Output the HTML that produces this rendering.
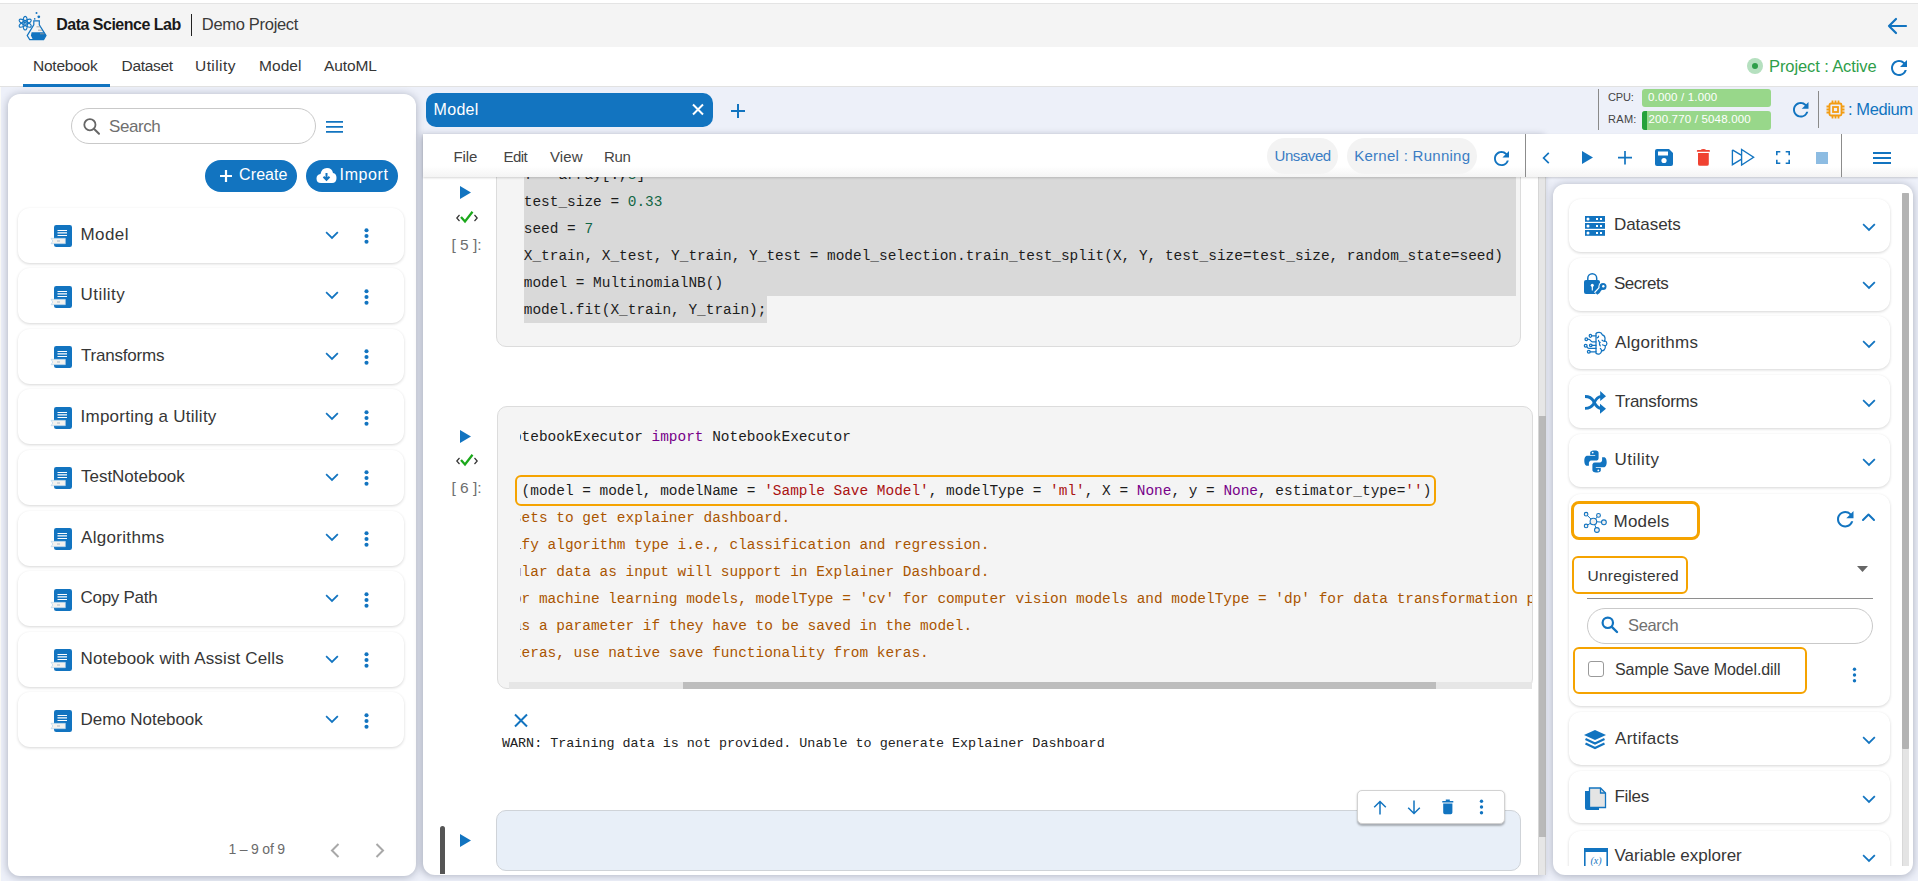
<!DOCTYPE html>
<html><head><meta charset="utf-8">
<style>
*{box-sizing:border-box;margin:0;padding:0}
html,body{width:1918px;height:881px;overflow:hidden;background:#edf0f9;font-family:"Liberation Sans",sans-serif;color:#222}
.a{position:absolute}
.t{position:absolute;white-space:nowrap;line-height:1}
svg{position:absolute;overflow:visible}
#top{left:0;top:0;width:1918px;height:47px;background:#f4f4f4;border-top:3px solid #fff}
#top:before{content:"";position:absolute;left:0;top:0;width:100%;height:1px;background:#e4e4e4}
#nav{left:0;top:47px;width:1918px;height:40px;background:#fff;border-bottom:1px solid #e2e2e2}
.li{position:absolute;left:18px;width:386px;height:55px;background:#fff;border-radius:12px;box-shadow:0 1px 3px rgba(0,0,0,.16)}
.li .nm{position:absolute;left:62px;top:19px;font-size:17px;color:#262626;white-space:nowrap;line-height:1}
.code{position:absolute;font-family:"Liberation Mono",monospace;font-size:14.45px;line-height:27px;white-space:pre;color:#1c1c1c}
.rc{position:absolute;left:1569px;width:321px;height:53px;background:#fff;border-radius:12px;box-shadow:0 1px 3px rgba(0,0,0,.16)}
.rc .nm{position:absolute;left:45px;top:18px;font-size:17px;color:#262626;white-space:nowrap;line-height:1}
</style></head><body>
<div id="top" class="a"></div><div id="nav" class="a"></div><svg style="left:14px;top:8px" width="36" height="36" viewBox="0 0 36 36">
<g fill="none" stroke="#1274c0" stroke-width="1.1">
<ellipse cx="11.2" cy="15.2" rx="6.8" ry="2.2" transform="rotate(90 11.2 15.2)"/>
<ellipse cx="11.2" cy="15.2" rx="6.8" ry="2.2" transform="rotate(30 11.2 15.2)"/>
<ellipse cx="11.2" cy="15.2" rx="6.8" ry="2.2" transform="rotate(150 11.2 15.2)"/>
<circle cx="11.2" cy="15.2" r="1.1"/>
<path d="M19.8 12.8 H25.3 V16.8 L32 27.6 L29.6 31.6 H15.7 L13.2 27.6 L19.8 16.8 Z" stroke-width="1.2"/>
</g>
<path d="M17.6 24.3 H30.2 L32 27.6 L29.6 31.6 H18.8 L16.9 27.6 Z" fill="#1274c0"/>
<path d="M22.5 18.8 H26.3 M24 22.2 H28 M26 25.8 H30.3" stroke="#9a9a9a" stroke-width="0.8"/>
<circle cx="22.5" cy="5" r="1" fill="#1274c0"/>
<circle cx="24.8" cy="8.8" r="1.4" fill="#1274c0"/>
<circle cx="20.7" cy="10.9" r="0.8" fill="#1274c0"/>
</svg><div class="t" style="left:56.2px;top:16.56px;font-size:16px;color:#1a1a1a;letter-spacing:-0.497px;font-weight:bold;">Data Science Lab</div><div class="a" style="left:190.5px;top:14px;width:1.6px;height:22px;background:#222"></div><div class="t" style="left:201.8px;top:16.14px;font-size:16.5px;color:#3a3a3a;letter-spacing:-0.305px;font-weight:normal;">Demo Project</div><svg style="left:1887px;top:17px" width="20" height="18" viewBox="0 0 20 18"><path d="M19 9 H2 M9 2 L2 9 L9 16" fill="none" stroke="#1274c0" stroke-width="2.2" stroke-linecap="round" stroke-linejoin="round"/></svg><div class="t" style="left:33px;top:58.09px;font-size:15.5px;color:#363636;letter-spacing:-0.243px;font-weight:normal;">Notebook</div><div class="t" style="left:121.5px;top:58.09px;font-size:15.5px;color:#363636;letter-spacing:-0.317px;font-weight:normal;">Dataset</div><div class="t" style="left:195px;top:58.09px;font-size:15.5px;color:#363636;letter-spacing:0.433px;font-weight:normal;">Utility</div><div class="t" style="left:259px;top:58.09px;font-size:15.5px;color:#363636;letter-spacing:0.06px;font-weight:normal;">Model</div><div class="t" style="left:324.0px;top:58.09px;font-size:15.5px;color:#363636;letter-spacing:-0.09px;font-weight:normal;">AutoML</div><div class="a" style="left:23px;top:84px;width:87px;height:3px;background:#1274c0"></div><div class="a" style="left:1747px;top:58px;width:16px;height:16px;border-radius:50%;background:#b5e0bf"></div><div class="a" style="left:1752px;top:63px;width:6px;height:6px;border-radius:50%;background:#2e9e4a"></div><div class="t" style="left:1769px;top:57.84px;font-size:16.5px;color:#2e9e4a;letter-spacing:-0.1px;font-weight:normal;">Project : Active</div><svg style="left:1890.5px;top:59.5px" width="16" height="16" viewBox="4 4 16 16"><path d="M17.65 6.35A7.958 7.958 0 0 0 12 4c-4.42 0-7.99 3.58-7.99 8s3.57 8 7.99 8c3.73 0 6.84-2.55 7.73-6h-2.08A5.990 5.990 0 0 1 12 18c-3.31 0-6-2.690-6-6s2.69-6 6-6c1.66 0 3.14.69 4.22 1.78L13 11h7V4l-2.35 2.35z" fill="#1274c0"/></svg><div class="a" style="left:0;top:87px;width:1px;height:794px;background:#fbfbf8"></div><div class="a" style="left:8px;top:94px;width:408px;height:781.5px;background:#fff;border-radius:12px;box-shadow:0 1px 8px rgba(10,20,50,.30)"></div><div class="a" style="left:71px;top:108px;width:245px;height:36px;border:1px solid #c9c9c9;border-radius:18px;background:#fff"></div><svg style="left:83px;top:118px" width="18" height="18" viewBox="0 0 18 18"><circle cx="6.9" cy="6.7" r="5.6" fill="none" stroke="#666" stroke-width="1.8"/><path d="M10.9 10.7 L16 15.8" stroke="#666" stroke-width="2" stroke-linecap="round"/></svg><div class="t" style="left:109px;top:118.42px;font-size:17px;color:#6f6f6f;letter-spacing:-0.44px;font-weight:normal;">Search</div><svg style="left:326px;top:120.5px" width="17" height="12" viewBox="0 0 17 12"><path d="M0 0.9 H17 M0 5.9 H17 M0 10.9 H17" stroke="#1274c0" stroke-width="1.8"/></svg><div class="a" style="left:205px;top:160px;width:92px;height:32px;border-radius:16px;background:#1274c0"></div><svg style="left:219px;top:169px" width="14" height="14" viewBox="0 0 14 14"><path d="M7 1 V13 M1 7 H13" stroke="#fff" stroke-width="2.2"/></svg><div class="t" style="left:239.10000000000002px;top:167.06px;font-size:16px;color:#fff;letter-spacing:0.08px;font-weight:normal;">Create</div><div class="a" style="left:306px;top:160px;width:92px;height:32px;border-radius:16px;background:#1274c0"></div><svg style="left:316px;top:167px" width="21" height="17" viewBox="0 0 21 17"><path d="M5 16 Q0.5 16 0.5 11.5 Q0.5 7.5 4.5 7 Q5.5 1 11 1 Q16 1 17 6 Q20.5 6.5 20.5 11 Q20.5 16 16 16 Z" fill="#fff"/><path d="M10.5 6 V12.5 M7.5 9.8 L10.5 12.8 L13.5 9.8" fill="none" stroke="#1274c0" stroke-width="2"/></svg><div class="t" style="left:339.6px;top:167.06px;font-size:16px;color:#fff;letter-spacing:0.6px;font-weight:normal;">Import</div><div class="li" style="top:207.5px"></div><svg style="left:51px;top:225px" width="22" height="22" viewBox="0 0 22 22"><rect x="3" y="0" width="18" height="22" rx="2.2" fill="#1274c0"/><path d="M6.5 5.5 H16 M6.5 7.8 H16 M6.5 10.5 H16" stroke="#fff" stroke-width="1.2"/><path d="M0 13.3 H14.4 V18.7 H0 L1.8 16 Z" fill="#f4f2ee" stroke="#a9d0ee" stroke-width="0.6"/><path d="M6 16 H9" stroke="#9ab" stroke-width="0.8"/></svg><div class="t" style="left:80.5px;top:225.82px;font-size:17px;color:#363636;letter-spacing:0.43px;font-weight:normal;">Model</div><svg style="left:326px;top:232px" width="12" height="7" viewBox="0 0 12 7"><path d="M0.8 0.8 L6 6 L11.2 0.8" fill="none" stroke="#1274c0" stroke-width="1.8" stroke-linecap="square" stroke-linejoin="miter"/></svg><svg style="left:363.5px;top:228px" width="6" height="16" viewBox="0 0 6 16"><circle cx="2.5" cy="2.2" r="2.05" fill="#1274c0"/><circle cx="2.5" cy="8" r="2.05" fill="#1274c0"/><circle cx="2.5" cy="13.8" r="2.05" fill="#1274c0"/></svg><div class="li" style="top:268.1px"></div><svg style="left:51px;top:286px" width="22" height="22" viewBox="0 0 22 22"><rect x="3" y="0" width="18" height="22" rx="2.2" fill="#1274c0"/><path d="M6.5 5.5 H16 M6.5 7.8 H16 M6.5 10.5 H16" stroke="#fff" stroke-width="1.2"/><path d="M0 13.3 H14.4 V18.7 H0 L1.8 16 Z" fill="#f4f2ee" stroke="#a9d0ee" stroke-width="0.6"/><path d="M6 16 H9" stroke="#9ab" stroke-width="0.8"/></svg><div class="t" style="left:80.5px;top:286.42px;font-size:17px;color:#363636;letter-spacing:0.45px;font-weight:normal;">Utility</div><svg style="left:326px;top:292px" width="12" height="7" viewBox="0 0 12 7"><path d="M0.8 0.8 L6 6 L11.2 0.8" fill="none" stroke="#1274c0" stroke-width="1.8" stroke-linecap="square" stroke-linejoin="miter"/></svg><svg style="left:363.5px;top:289px" width="6" height="16" viewBox="0 0 6 16"><circle cx="2.5" cy="2.2" r="2.05" fill="#1274c0"/><circle cx="2.5" cy="8" r="2.05" fill="#1274c0"/><circle cx="2.5" cy="13.8" r="2.05" fill="#1274c0"/></svg><div class="li" style="top:328.7px"></div><svg style="left:51px;top:346px" width="22" height="22" viewBox="0 0 22 22"><rect x="3" y="0" width="18" height="22" rx="2.2" fill="#1274c0"/><path d="M6.5 5.5 H16 M6.5 7.8 H16 M6.5 10.5 H16" stroke="#fff" stroke-width="1.2"/><path d="M0 13.3 H14.4 V18.7 H0 L1.8 16 Z" fill="#f4f2ee" stroke="#a9d0ee" stroke-width="0.6"/><path d="M6 16 H9" stroke="#9ab" stroke-width="0.8"/></svg><div class="t" style="left:81.0px;top:347.02px;font-size:17px;color:#363636;letter-spacing:-0.216px;font-weight:normal;">Transforms</div><svg style="left:326px;top:353px" width="12" height="7" viewBox="0 0 12 7"><path d="M0.8 0.8 L6 6 L11.2 0.8" fill="none" stroke="#1274c0" stroke-width="1.8" stroke-linecap="square" stroke-linejoin="miter"/></svg><svg style="left:363.5px;top:349px" width="6" height="16" viewBox="0 0 6 16"><circle cx="2.5" cy="2.2" r="2.05" fill="#1274c0"/><circle cx="2.5" cy="8" r="2.05" fill="#1274c0"/><circle cx="2.5" cy="13.8" r="2.05" fill="#1274c0"/></svg><div class="li" style="top:389.3px"></div><svg style="left:51px;top:407px" width="22" height="22" viewBox="0 0 22 22"><rect x="3" y="0" width="18" height="22" rx="2.2" fill="#1274c0"/><path d="M6.5 5.5 H16 M6.5 7.8 H16 M6.5 10.5 H16" stroke="#fff" stroke-width="1.2"/><path d="M0 13.3 H14.4 V18.7 H0 L1.8 16 Z" fill="#f4f2ee" stroke="#a9d0ee" stroke-width="0.6"/><path d="M6 16 H9" stroke="#9ab" stroke-width="0.8"/></svg><div class="t" style="left:80.5px;top:407.62px;font-size:17px;color:#363636;letter-spacing:0.253px;font-weight:normal;">Importing a Utility</div><svg style="left:326px;top:413px" width="12" height="7" viewBox="0 0 12 7"><path d="M0.8 0.8 L6 6 L11.2 0.8" fill="none" stroke="#1274c0" stroke-width="1.8" stroke-linecap="square" stroke-linejoin="miter"/></svg><svg style="left:363.5px;top:410px" width="6" height="16" viewBox="0 0 6 16"><circle cx="2.5" cy="2.2" r="2.05" fill="#1274c0"/><circle cx="2.5" cy="8" r="2.05" fill="#1274c0"/><circle cx="2.5" cy="13.8" r="2.05" fill="#1274c0"/></svg><div class="li" style="top:449.9px"></div><svg style="left:51px;top:467px" width="22" height="22" viewBox="0 0 22 22"><rect x="3" y="0" width="18" height="22" rx="2.2" fill="#1274c0"/><path d="M6.5 5.5 H16 M6.5 7.8 H16 M6.5 10.5 H16" stroke="#fff" stroke-width="1.2"/><path d="M0 13.3 H14.4 V18.7 H0 L1.8 16 Z" fill="#f4f2ee" stroke="#a9d0ee" stroke-width="0.6"/><path d="M6 16 H9" stroke="#9ab" stroke-width="0.8"/></svg><div class="t" style="left:81.0px;top:468.22px;font-size:17px;color:#363636;letter-spacing:-0.016px;font-weight:normal;">TestNotebook</div><svg style="left:326px;top:474px" width="12" height="7" viewBox="0 0 12 7"><path d="M0.8 0.8 L6 6 L11.2 0.8" fill="none" stroke="#1274c0" stroke-width="1.8" stroke-linecap="square" stroke-linejoin="miter"/></svg><svg style="left:363.5px;top:470px" width="6" height="16" viewBox="0 0 6 16"><circle cx="2.5" cy="2.2" r="2.05" fill="#1274c0"/><circle cx="2.5" cy="8" r="2.05" fill="#1274c0"/><circle cx="2.5" cy="13.8" r="2.05" fill="#1274c0"/></svg><div class="li" style="top:510.5px"></div><svg style="left:51px;top:528px" width="22" height="22" viewBox="0 0 22 22"><rect x="3" y="0" width="18" height="22" rx="2.2" fill="#1274c0"/><path d="M6.5 5.5 H16 M6.5 7.8 H16 M6.5 10.5 H16" stroke="#fff" stroke-width="1.2"/><path d="M0 13.3 H14.4 V18.7 H0 L1.8 16 Z" fill="#f4f2ee" stroke="#a9d0ee" stroke-width="0.6"/><path d="M6 16 H9" stroke="#9ab" stroke-width="0.8"/></svg><div class="t" style="left:81.0px;top:528.82px;font-size:17px;color:#363636;letter-spacing:0.314px;font-weight:normal;">Algorithms</div><svg style="left:326px;top:534px" width="12" height="7" viewBox="0 0 12 7"><path d="M0.8 0.8 L6 6 L11.2 0.8" fill="none" stroke="#1274c0" stroke-width="1.8" stroke-linecap="square" stroke-linejoin="miter"/></svg><svg style="left:363.5px;top:531px" width="6" height="16" viewBox="0 0 6 16"><circle cx="2.5" cy="2.2" r="2.05" fill="#1274c0"/><circle cx="2.5" cy="8" r="2.05" fill="#1274c0"/><circle cx="2.5" cy="13.8" r="2.05" fill="#1274c0"/></svg><div class="li" style="top:571.1px"></div><svg style="left:51px;top:589px" width="22" height="22" viewBox="0 0 22 22"><rect x="3" y="0" width="18" height="22" rx="2.2" fill="#1274c0"/><path d="M6.5 5.5 H16 M6.5 7.8 H16 M6.5 10.5 H16" stroke="#fff" stroke-width="1.2"/><path d="M0 13.3 H14.4 V18.7 H0 L1.8 16 Z" fill="#f4f2ee" stroke="#a9d0ee" stroke-width="0.6"/><path d="M6 16 H9" stroke="#9ab" stroke-width="0.8"/></svg><div class="t" style="left:80.5px;top:589.42px;font-size:17px;color:#363636;letter-spacing:-0.275px;font-weight:normal;">Copy Path</div><svg style="left:326px;top:595px" width="12" height="7" viewBox="0 0 12 7"><path d="M0.8 0.8 L6 6 L11.2 0.8" fill="none" stroke="#1274c0" stroke-width="1.8" stroke-linecap="square" stroke-linejoin="miter"/></svg><svg style="left:363.5px;top:592px" width="6" height="16" viewBox="0 0 6 16"><circle cx="2.5" cy="2.2" r="2.05" fill="#1274c0"/><circle cx="2.5" cy="8" r="2.05" fill="#1274c0"/><circle cx="2.5" cy="13.8" r="2.05" fill="#1274c0"/></svg><div class="li" style="top:631.7px"></div><svg style="left:51px;top:649px" width="22" height="22" viewBox="0 0 22 22"><rect x="3" y="0" width="18" height="22" rx="2.2" fill="#1274c0"/><path d="M6.5 5.5 H16 M6.5 7.8 H16 M6.5 10.5 H16" stroke="#fff" stroke-width="1.2"/><path d="M0 13.3 H14.4 V18.7 H0 L1.8 16 Z" fill="#f4f2ee" stroke="#a9d0ee" stroke-width="0.6"/><path d="M6 16 H9" stroke="#9ab" stroke-width="0.8"/></svg><div class="t" style="left:80.5px;top:650.02px;font-size:17px;color:#363636;letter-spacing:0.154px;font-weight:normal;">Notebook with Assist Cells</div><svg style="left:326px;top:656px" width="12" height="7" viewBox="0 0 12 7"><path d="M0.8 0.8 L6 6 L11.2 0.8" fill="none" stroke="#1274c0" stroke-width="1.8" stroke-linecap="square" stroke-linejoin="miter"/></svg><svg style="left:363.5px;top:652px" width="6" height="16" viewBox="0 0 6 16"><circle cx="2.5" cy="2.2" r="2.05" fill="#1274c0"/><circle cx="2.5" cy="8" r="2.05" fill="#1274c0"/><circle cx="2.5" cy="13.8" r="2.05" fill="#1274c0"/></svg><div class="li" style="top:692.3px"></div><svg style="left:51px;top:710px" width="22" height="22" viewBox="0 0 22 22"><rect x="3" y="0" width="18" height="22" rx="2.2" fill="#1274c0"/><path d="M6.5 5.5 H16 M6.5 7.8 H16 M6.5 10.5 H16" stroke="#fff" stroke-width="1.2"/><path d="M0 13.3 H14.4 V18.7 H0 L1.8 16 Z" fill="#f4f2ee" stroke="#a9d0ee" stroke-width="0.6"/><path d="M6 16 H9" stroke="#9ab" stroke-width="0.8"/></svg><div class="t" style="left:80.5px;top:710.62px;font-size:17px;color:#363636;letter-spacing:-0.047px;font-weight:normal;">Demo Notebook</div><svg style="left:326px;top:716px" width="12" height="7" viewBox="0 0 12 7"><path d="M0.8 0.8 L6 6 L11.2 0.8" fill="none" stroke="#1274c0" stroke-width="1.8" stroke-linecap="square" stroke-linejoin="miter"/></svg><svg style="left:363.5px;top:713px" width="6" height="16" viewBox="0 0 6 16"><circle cx="2.5" cy="2.2" r="2.05" fill="#1274c0"/><circle cx="2.5" cy="8" r="2.05" fill="#1274c0"/><circle cx="2.5" cy="13.8" r="2.05" fill="#1274c0"/></svg><div class="t" style="left:228.5px;top:841.86px;font-size:14px;color:#6b6b6b;letter-spacing:-0.201px;font-weight:normal;">1 – 9 of 9</div><svg style="left:330px;top:843px" width="10" height="15" viewBox="0 0 10 15"><path d="M8.5 1 L2 7.5 L8.5 14" fill="none" stroke="#a8a8a8" stroke-width="2"/></svg><svg style="left:375px;top:843px" width="10" height="15" viewBox="0 0 10 15"><path d="M1.5 1 L8 7.5 L1.5 14" fill="none" stroke="#a8a8a8" stroke-width="2"/></svg><div class="a" style="left:426px;top:93px;width:287px;height:34px;border-radius:10px;background:#1274c0"></div><div class="t" style="left:433.5px;top:101.86px;font-size:16px;color:#fff;letter-spacing:0.325px;font-weight:normal;">Model</div><svg style="left:692px;top:104px" width="12" height="11" viewBox="0 0 12 11"><path d="M1 0.5 L11 10.5 M11 0.5 L1 10.5" stroke="#fff" stroke-width="2"/></svg><svg style="left:731px;top:104px" width="14" height="14" viewBox="0 0 14 14"><path d="M7 0 V14 M0 7 H14" stroke="#1274c0" stroke-width="2"/></svg><div class="a" style="left:1598px;top:89px;width:1px;height:41px;background:#8a8a8a"></div><div class="t" style="left:1608px;top:91.99px;font-size:11px;color:#444;letter-spacing:-0.17px;font-weight:normal;">CPU:</div><div class="t" style="left:1608px;top:113.99px;font-size:11px;color:#444;letter-spacing:0.3px;font-weight:normal;">RAM:</div><div class="a" style="left:1642px;top:89px;width:129px;height:18px;border-radius:3px;background:#98d78a"></div><div class="a" style="left:1642px;top:111px;width:129px;height:19px;border-radius:3px;background:#98d78a;overflow:hidden"><div class="a" style="left:0;top:0;width:5px;height:19px;background:#25a13c"></div></div><div class="t" style="left:1648px;top:91.57px;font-size:11.5px;color:#fff;letter-spacing:0.17px;font-weight:normal;">0.000 / 1.000</div><div class="t" style="left:1648.5px;top:113.57px;font-size:11.5px;color:#fff;letter-spacing:0.18px;font-weight:normal;">200.770 / 5048.000</div><svg style="left:1792.5px;top:101.5px" width="15.5" height="15.5" viewBox="4 4 16 16"><path d="M17.65 6.35A7.958 7.958 0 0 0 12 4c-4.42 0-7.99 3.58-7.99 8s3.57 8 7.99 8c3.73 0 6.84-2.55 7.73-6h-2.08A5.990 5.990 0 0 1 12 18c-3.31 0-6-2.690-6-6s2.69-6 6-6c1.66 0 3.14.69 4.22 1.78L13 11h7V4l-2.35 2.35z" fill="#1274c0"/></svg><div class="a" style="left:1818px;top:91px;width:1px;height:37px;background:#8a8a8a"></div><svg style="left:1826px;top:100px" width="19" height="19" viewBox="0 0 19 19"><g stroke="#f39c12" stroke-width="1.8" fill="none"><rect x="3.5" y="3.5" width="12" height="12" rx="1.5"/><rect x="7" y="7" width="5" height="5"/><path d="M6.5 0.5 V3.5 M9.5 0.5 V3.5 M12.5 0.5 V3.5 M6.5 15.5 V18.5 M9.5 15.5 V18.5 M12.5 15.5 V18.5 M0.5 6.5 H3.5 M0.5 9.5 H3.5 M0.5 12.5 H3.5 M15.5 6.5 H18.5 M15.5 9.5 H18.5 M15.5 12.5 H18.5"/></g></svg><div class="t" style="left:1848.0px;top:100.64px;font-size:16.5px;color:#1274c0;letter-spacing:-0.411px;font-weight:normal;">: Medium</div><div class="a" style="left:423px;top:134px;width:1495px;height:43px;background:linear-gradient(#fff 0,#fff 75%,#f4f4f4 100%);box-shadow:0 1px 2px rgba(0,0,0,.16);z-index:5"></div><div class="a" style="left:423px;top:134px;width:1123px;height:741px;background:#fff;border-radius:0 0 0 12px;box-shadow:-2px 1px 7px rgba(10,20,50,.26)"></div><div class="a" style="left:423px;top:177px;width:1123px;height:697px;overflow:hidden"><div class="a" style="left:73px;top:-200px;width:1025px;height:369.5px;background:#f4f4f4;border:1px solid #dcdcdc;border-radius:10px"></div><div class="a" style="left:100.8px;top:0px;width:992.2px;height:119px;background:#d9d9d9"></div><div class="a" style="left:100.8px;top:119px;width:243.2px;height:26.5px;background:#d9d9d9"></div><div class="code" style="left:100.8px;top:-15.4px">Y = array[:,<span style="color:#116644">8</span>]
test_size = <span style="color:#116644">0.33</span>
seed = <span style="color:#116644">7</span>
X_train, X_test, Y_train, Y_test = model_selection.train_test_split(X, Y, test_size=test_size, random_state=seed)
model = MultinomialNB()
model.fit(X_train, Y_train);</div><svg style="left:37.39999999999998px;top:9px" width="11" height="13" viewBox="0 0 11 13"><path d="M0 0 L11 6.5 L0 13 Z" fill="#1274c0"/></svg><svg style="left:33px;top:33.5px" width="22" height="12" viewBox="0 0 22 12"><path d="M3.5 4 L0.8 7 L3.5 10 M18.5 4 L21.2 7 L18.5 10" fill="none" stroke="#333" stroke-width="1.2"/><path d="M5 6 L9 10.5 L16.5 0.8" fill="none" stroke="#1ba81b" stroke-width="2.3"/></svg><div class="t" style="left:28.5px;top:59.5px;font-size:15.5px;color:#6e6e6e">[ 5 ]:</div><div class="a" style="left:73.5px;top:229.3px;width:1036.5px;height:283px;background:#f4f4f4;border:1px solid #dcdcdc;border-radius:10px"></div><svg style="left:37.39999999999998px;top:253px" width="11" height="13" viewBox="0 0 11 13"><path d="M0 0 L11 6.5 L0 13 Z" fill="#1274c0"/></svg><svg style="left:33px;top:277.3px" width="22" height="12" viewBox="0 0 22 12"><path d="M3.5 4 L0.8 7 L3.5 10 M18.5 4 L21.2 7 L18.5 10" fill="none" stroke="#333" stroke-width="1.2"/><path d="M5 6 L9 10.5 L16.5 0.8" fill="none" stroke="#1ba81b" stroke-width="2.3"/></svg><div class="t" style="left:28.5px;top:303px;font-size:15.5px;color:#6e6e6e">[ 6 ]:</div><div class="a" style="left:96.5px;top:229.3px;width:1012.5px;height:275px;overflow:hidden"><div class="code" style="left:-6.6px;top:17.3px">otebookExecutor <span style="color:#770088">import</span> NotebookExecutor

.(model = model, modelName = <span style='color:#aa1111'>'Sample Save Model'</span>, modelType = <span style='color:#aa1111'>'ml'</span>, X = <span style='color:#770088'>None</span>, y = <span style='color:#770088'>None</span>, estimator_type=<span style='color:#aa1111'>''</span>)
<span style="color:#aa5500">sets to get explainer dashboard.</span>
<span style="color:#aa5500">ify algorithm type i.e., classification and regression.</span>
<span style="color:#aa5500">ular data as input will support in Explainer Dashboard.</span>
<span style='color:#aa5500'>or machine learning models, modelType = 'cv' for computer vision models and modelType = 'dp' for data transformation pipelines</span>
<span style="color:#aa5500">as a parameter if they have to be saved in the model.</span>
<span style="color:#aa5500">keras, use native save functionality from keras.</span></div></div><div class="a" style="left:92.39999999999998px;top:298.4px;width:920.6px;height:30.5px;border:2.2px solid #f5a300;border-radius:6px"></div><div class="a" style="left:86px;top:504.5px;width:1023px;height:7px;background:#e6e6e6"></div><div class="a" style="left:260px;top:504.5px;width:753px;height:7px;background:#bdbdbd"></div><svg style="left:91px;top:537px" width="14" height="13" viewBox="0 0 14 13"><path d="M1 0.5 L13 12.5 M13 0.5 L1 12.5" stroke="#1274c0" stroke-width="2"/></svg><div class="code" style="left:79px;top:557.0px;font-size:13.4px;line-height:19px;color:#222">WARN: Training data is not provided. Unable to generate Explainer Dashboard</div><div class="a" style="left:73px;top:633px;width:1025px;height:61px;background:#e8eff8;border:1px solid #cfd3d8;border-radius:10px"></div><div class="a" style="left:16.5px;top:648.5px;width:5.4px;height:80px;background:#555;border-radius:3px"></div><svg style="left:37.39999999999998px;top:656.5px" width="11" height="13" viewBox="0 0 11 13"><path d="M0 0 L11 6.5 L0 13 Z" fill="#1274c0"/></svg><div class="a" style="left:933.5px;top:613.3px;width:148px;height:34px;background:#fff;border:1px solid #d2d2d2;border-radius:5px;box-shadow:0 1.5px 2px rgba(0,0,0,.28)"></div><svg style="left:949.5999999999999px;top:622.5px" width="14" height="16" viewBox="0 0 14 16"><path d="M7 14.5 V1.5 M1.2 7.3 L7 1.5 L12.8 7.3" fill="none" stroke="#1274c0" stroke-width="1.5"/></svg><svg style="left:983.5px;top:622.5px" width="14" height="16" viewBox="0 0 14 16"><path d="M7 0.5 V13.5 M1.2 7.7 L7 13.5 L12.8 7.7" fill="none" stroke="#1274c0" stroke-width="1.5"/></svg><svg style="left:1018.5999999999999px;top:621.7px" width="12" height="16" viewBox="0 0 12 16"><path d="M0.3 2 H11.3 V3.6 H0.3 Z M3.8 0.5 H7.8 V2 H3.8 Z M1.2 4.6 H10.4 V13.6 Q10.4 15.3 8.7 15.3 H2.9 Q1.2 15.3 1.2 13.6 Z" fill="#1274c0"/></svg><svg style="left:1055.6px;top:622px" width="6" height="16" viewBox="0 0 6 16"><circle cx="2.5" cy="2.2" r="1.7" fill="#1274c0"/><circle cx="2.5" cy="8" r="1.7" fill="#1274c0"/><circle cx="2.5" cy="13.8" r="1.7" fill="#1274c0"/></svg></div><div class="a" style="left:1538px;top:177px;width:8px;height:698px;background:#e6e6e6;border-left:1px solid #d6d6d6;border-right:1px solid #d0d0d0"></div><div class="a" style="left:1538.5px;top:416px;width:7px;height:421px;background:#b9b9b9"></div><div class="a" style="left:0;top:0;width:1918px;height:881px;z-index:6;pointer-events:none"><div class="t" style="left:453.5px;top:149.31px;font-size:15px;color:#444;letter-spacing:-0.137px;font-weight:normal;">File</div><div class="t" style="left:503.5px;top:149.31px;font-size:15px;color:#444;letter-spacing:-0.57px;font-weight:normal;">Edit</div><div class="t" style="left:550.0px;top:149.31px;font-size:15px;color:#444;letter-spacing:0.117px;font-weight:normal;">View</div><div class="t" style="left:604.0px;top:149.31px;font-size:15px;color:#444;letter-spacing:-0.3px;font-weight:normal;">Run</div><div class="a" style="left:1267px;top:138px;width:71px;height:36px;border-radius:18px;background:#f3f3f3"></div><div class="t" style="left:1274.5px;top:148.41px;font-size:15px;color:#3b7dc4;letter-spacing:-0.417px;font-weight:normal;">Unsaved</div><div class="a" style="left:1347px;top:138px;width:130px;height:36px;border-radius:18px;background:#f3f3f3"></div><div class="t" style="left:1354.2px;top:148.41px;font-size:15px;color:#3b7dc4;letter-spacing:0.277px;font-weight:normal;">Kernel : Running</div><svg style="left:1494px;top:151px" width="15" height="15" viewBox="4 4 16 16"><path d="M17.65 6.35A7.958 7.958 0 0 0 12 4c-4.42 0-7.99 3.58-7.99 8s3.57 8 7.99 8c3.73 0 6.84-2.55 7.73-6h-2.08A5.990 5.990 0 0 1 12 18c-3.31 0-6-2.690-6-6s2.69-6 6-6c1.66 0 3.14.69 4.22 1.78L13 11h7V4l-2.35 2.35z" fill="#1274c0"/></svg><div class="a" style="left:1525px;top:134px;width:1px;height:43px;background:#8c8c8c"></div><div class="a" style="left:1841px;top:134px;width:1px;height:43px;background:#8c8c8c"></div><svg style="left:1542px;top:151.5px" width="8" height="12" viewBox="0 0 8 12"><path d="M6.8 0.8 L1.6 6 L6.8 11.2" fill="none" stroke="#1274c0" stroke-width="1.7"/></svg><svg style="left:1581.5px;top:151px" width="11" height="13" viewBox="0 0 11 13"><path d="M0 0 L11 6.5 L0 13 Z" fill="#1274c0"/></svg><svg style="left:1617.5px;top:150.7px" width="14" height="13.5" viewBox="0 0 14 13.5"><path d="M7 0 V13.5 M0 6.6 H14" stroke="#1274c0" stroke-width="1.7"/></svg><svg style="left:1655px;top:149px" width="18" height="17" viewBox="0 0 18 17"><path d="M2 0 H14 L18 4 V15 Q18 17 16 17 H2 Q0 17 0 15 V2 Q0 0 2 0 Z" fill="#1274c0"/><rect x="3" y="2.5" width="10" height="4" fill="#fff"/><circle cx="9" cy="11.5" r="2.6" fill="#fff"/></svg><svg style="left:1696px;top:149px" width="15" height="17" viewBox="0 0 15 17"><path d="M0.9 1.6 Q0.9 0.9 1.8 0.9 H4.8 Q5.2 0 7.4 0 Q9.6 0 10 0.9 H13 Q13.9 0.9 13.9 1.6 V2.7 H0.9 Z" fill="#f04231"/><path d="M2 4.1 H12.8 V14.9 Q12.8 16.8 10.9 16.8 H3.9 Q2 16.8 2 14.9 Z" fill="#f04231"/></svg><svg style="left:1731px;top:149px" width="24" height="17" viewBox="0 0 24 17"><path d="M1.4 0.9 V15.7 L10.6 10.2 M1.4 0.9 L10.6 6.3 M10.6 0.5 V16 L22.6 8.2 Z" fill="none" stroke="#1274c0" stroke-width="1.35" stroke-linejoin="miter"/></svg><svg style="left:1775.5px;top:151px" width="14" height="13" viewBox="0 0 14 13"><path d="M0.8 4.3 V0.8 H4.3 M9.7 0.8 H13.2 V4.3 M13.2 8.7 V12.2 H9.7 M4.3 12.2 H0.8 V8.7" fill="none" stroke="#1274c0" stroke-width="1.6"/></svg><div class="a" style="left:1816px;top:152px;width:12px;height:11.5px;background:#8dbce2"></div><svg style="left:1872.5px;top:151.5px" width="18" height="12" viewBox="0 0 18 12"><path d="M0 1 H18 M0 6 H18 M0 11 H18" stroke="#1274c0" stroke-width="2"/></svg></div><div class="a" style="left:1553px;top:184px;width:360px;height:691px;background:#fff;border-radius:12px;box-shadow:0 1px 8px rgba(10,20,50,.30)"></div><div class="a" style="left:1553px;top:190px;width:360px;height:676px;overflow:hidden"><div class="a" style="left:16px;top:9px;width:321px;height:53px;background:#fff;border-radius:12px;box-shadow:0 1px 3px rgba(0,0,0,.17)"></div><div class="t" style="left:61.0px;top:25.62px;font-size:17px;color:#363636;letter-spacing:-0.054px;font-weight:normal;">Datasets</div><svg style="left:309.5px;top:33.5px" width="12" height="7" viewBox="0 0 12 7"><path d="M0.8 0.8 L6 6 L11.2 0.8" fill="none" stroke="#1274c0" stroke-width="1.8" stroke-linecap="square"/></svg><div class="a" style="left:16px;top:67.5px;width:321px;height:53px;background:#fff;border-radius:12px;box-shadow:0 1px 3px rgba(0,0,0,.17)"></div><div class="t" style="left:61.0px;top:84.92px;font-size:17px;color:#363636;letter-spacing:-0.48px;font-weight:normal;">Secrets</div><svg style="left:309.5px;top:92.0px" width="12" height="7" viewBox="0 0 12 7"><path d="M0.8 0.8 L6 6 L11.2 0.8" fill="none" stroke="#1274c0" stroke-width="1.8" stroke-linecap="square"/></svg><div class="a" style="left:16px;top:126px;width:321px;height:53px;background:#fff;border-radius:12px;box-shadow:0 1px 3px rgba(0,0,0,.17)"></div><div class="t" style="left:62.0px;top:144.32px;font-size:17px;color:#363636;letter-spacing:0.294px;font-weight:normal;">Algorithms</div><svg style="left:309.5px;top:150.5px" width="12" height="7" viewBox="0 0 12 7"><path d="M0.8 0.8 L6 6 L11.2 0.8" fill="none" stroke="#1274c0" stroke-width="1.8" stroke-linecap="square"/></svg><div class="a" style="left:16px;top:185px;width:321px;height:53px;background:#fff;border-radius:12px;box-shadow:0 1px 3px rgba(0,0,0,.17)"></div><div class="t" style="left:62.0px;top:203.12px;font-size:17px;color:#363636;letter-spacing:-0.256px;font-weight:normal;">Transforms</div><svg style="left:309.5px;top:209.5px" width="12" height="7" viewBox="0 0 12 7"><path d="M0.8 0.8 L6 6 L11.2 0.8" fill="none" stroke="#1274c0" stroke-width="1.8" stroke-linecap="square"/></svg><div class="a" style="left:16px;top:244px;width:321px;height:53px;background:#fff;border-radius:12px;box-shadow:0 1px 3px rgba(0,0,0,.17)"></div><div class="t" style="left:61.5px;top:261.42px;font-size:17px;color:#363636;letter-spacing:0.48px;font-weight:normal;">Utility</div><svg style="left:309.5px;top:268.5px" width="12" height="7" viewBox="0 0 12 7"><path d="M0.8 0.8 L6 6 L11.2 0.8" fill="none" stroke="#1274c0" stroke-width="1.8" stroke-linecap="square"/></svg><svg style="left:32px;top:26px" width="20" height="20" viewBox="0 0 20 20"><rect x="0" y="0" width="20" height="5.8" fill="#1274c0"/><circle cx="3" cy="2.9" r="1.5" fill="#fff"/><rect x="11" y="2" width="2" height="2" fill="#fff"/><rect x="15" y="2" width="2" height="2" fill="#fff"/><rect x="0" y="7" width="20" height="5.8" fill="#1274c0"/><circle cx="3" cy="9.9" r="1.5" fill="#fff"/><rect x="11" y="9" width="2" height="2" fill="#fff"/><rect x="15" y="9" width="2" height="2" fill="#fff"/><rect x="0" y="14" width="20" height="5.8" fill="#1274c0"/><circle cx="3" cy="16.9" r="1.5" fill="#fff"/><rect x="11" y="16" width="2" height="2" fill="#fff"/><rect x="15" y="16" width="2" height="2" fill="#fff"/></svg><svg style="left:31px;top:82px" width="24" height="24" viewBox="0 0 24 24"><path d="M3.8 8.5 V6.3 A4.45 4.45 0 0 1 12.7 6.3 V8.5" fill="none" stroke="#1274c0" stroke-width="1.5"/><rect x="0" y="8" width="16" height="14" rx="2" fill="#1274c0"/><circle cx="8.3" cy="13.3" r="1.5" fill="#fff"/><path d="M7.6 13.3 H9 L8.8 18.5 H7.8 Z" fill="#fff"/><path d="M12 22 L18.5 15" stroke="#fff" stroke-width="5.5"/><circle cx="19" cy="14.5" r="4.6" fill="#fff"/><path d="M12.3 21.7 L18 15.5 M13.8 19.2 L15.6 20.8 M15.4 17.4 L17 18.8" stroke="#1274c0" stroke-width="3"/><circle cx="19" cy="14.5" r="3.5" fill="#1274c0"/><circle cx="19.3" cy="14.2" r="1.2" fill="#fff"/></svg><svg style="left:27px;top:138px" width="30" height="30" viewBox="0 0 30 30"><g fill="none" stroke="#1274c0" stroke-width="1.25" stroke-linecap="round"><path d="M16 5.5 Q17 4.2 19.3 4.3 Q21.5 4.4 22.3 6.8 Q24.8 7.5 25 10 Q25.2 11.5 24.6 12.5 Q26.9 13.5 26.9 15.5 Q26.8 17.3 25.3 18 Q25.6 20.5 24.3 21.8 Q23.2 22.9 21.6 22.8 Q21.2 25.3 19.5 26 Q17.5 26.6 16 25.3 Z"/><path d="M17 9.8 Q18.6 9.4 18.6 8.2 M18.5 12.3 Q18.6 14.2 20.2 14.3 M19.5 14.5 Q19.2 16.6 20.3 17.8 M22 12.2 Q23.2 13.5 25 13.3 M22.5 16.8 Q23.6 17.6 25.2 17.5 M20.4 20.4 Q21.5 21.3 21.6 22.7"/><path d="M11.7 7.8 H16 M7.6 11.2 Q9.8 11.2 10.6 12.5 Q11.3 13.8 12.5 13.8 H16 M12.1 17.3 H16 M6.9 18.8 Q7.6 20.4 9 20.4 H16 M10.2 23.8 H16"/><ellipse cx="10.4" cy="7.8" rx="1.2" ry="1.5"/><circle cx="6.3" cy="11.2" r="1.3"/><circle cx="5.7" cy="17.7" r="1.4"/><circle cx="10.8" cy="17.3" r="1.3"/><circle cx="8.8" cy="23.8" r="1.4"/></g></svg><svg style="left:27px;top:197px" width="30" height="30" viewBox="0 0 30 30"><g fill="none" stroke="#1274c0" stroke-width="2.8"><path d="M5 9.5 Q11 9.5 13.5 14 L14.5 16 Q17 20.8 21 21.6"/><path d="M5 21.4 Q11 21.4 13.5 17 L14.5 15 Q17 10 21 9.3"/></g><path d="M20.2 4 L26 9.2 L20.2 14 Z M20 16.8 L26 21.7 L20 26.7 Z" fill="#1274c0"/></svg><svg style="left:31.2px;top:260px" width="23" height="23" viewBox="0 0 23 23"><path d="M11 0.5 C6 0.5 6.2 2.6 6.2 2.6 V5 H11.2 V5.8 H3.5 C3.5 5.8 0.3 5.5 0.3 10.8 C0.3 16 3.1 15.8 3.1 15.8 H4.9 V13.3 C4.9 13.3 4.8 10.5 7.6 10.5 H11.9 C11.9 10.5 14.6 10.6 14.6 7.9 V3.2 C14.6 3.2 15 0.5 11 0.5 Z" fill="#1274c0"/><circle cx="8.7" cy="2.6" r="0.9" fill="#fff"/><path d="M12 22.5 C17 22.5 16.8 20.4 16.8 20.4 V18 H11.8 V17.2 H19.5 C19.5 17.2 22.7 17.5 22.7 12.2 C22.7 7 19.9 7.2 19.9 7.2 H18.1 V9.7 C18.1 9.7 18.2 12.5 15.4 12.5 H11.1 C11.1 12.5 8.4 12.4 8.4 15.1 V19.8 C8.4 19.8 8 22.5 12 22.5 Z" fill="#1274c0"/><circle cx="14.3" cy="20.4" r="0.9" fill="#fff"/></svg><div class="a" style="left:16px;top:304px;width:321px;height:212px;background:#fff;border-radius:12px;box-shadow:0 1px 3px rgba(0,0,0,.17)"></div><svg style="left:25px;top:316px" width="34" height="34" viewBox="0 0 34 34"><g fill="none" stroke="#1274c0" stroke-width="1"><path d="M15.4 15.5 L8.1 8.2 M15.4 15.5 L20.5 9.4 M15.4 15.5 L25.9 16.3 M15.4 15.5 L8.1 19.9 M15.4 15.5 L18.9 24"/></g><g fill="#f2f0ee" stroke="#1274c0" stroke-width="1.1"><circle cx="8.1" cy="8.2" r="1.8"/><circle cx="20.5" cy="9.4" r="1.9"/><circle cx="25.9" cy="16.3" r="2.4"/><circle cx="8.1" cy="19.9" r="1.8"/><circle cx="18.9" cy="24" r="2.4"/><circle cx="15.4" cy="15.5" r="3.3"/></g></svg><div class="t" style="left:60.599999999999994px;top:322.92px;font-size:17px;color:#363636;letter-spacing:0.18px;font-weight:normal;">Models</div><div class="a" style="left:18px;top:311px;width:129px;height:39px;border:3.8px solid #f5a300;border-radius:8px"></div><svg style="left:284px;top:321px" width="16.5" height="16.5" viewBox="4 4 16 16"><path d="M17.65 6.35A7.958 7.958 0 0 0 12 4c-4.42 0-7.99 3.58-7.99 8s3.57 8 7.99 8c3.73 0 6.84-2.55 7.73-6h-2.08A5.990 5.990 0 0 1 12 18c-3.31 0-6-2.690-6-6s2.69-6 6-6c1.66 0 3.14.69 4.22 1.78L13 11h7V4l-2.35 2.35z" fill="#1274c0"/></svg><svg style="left:309px;top:323px" width="13" height="8" viewBox="0 0 13 8"><path d="M1 7 L6.5 1.5 L12 7" fill="none" stroke="#1274c0" stroke-width="2" stroke-linecap="round" stroke-linejoin="round"/></svg><div class="a" style="left:19.2px;top:366.4px;width:116px;height:38px;border:2px solid #f5a300;border-radius:6px"></div><div class="t" style="left:34.6px;top:377.79px;font-size:15.5px;color:#363636;letter-spacing:0.209px;font-weight:normal;">Unregistered</div><svg style="left:304px;top:376px" width="11" height="6" viewBox="0 0 11 6"><path d="M0 0 H11 L5.5 6 Z" fill="#666"/></svg><div class="a" style="left:34px;top:407.6px;width:286px;height:1px;background:#8e8e8e"></div><div class="a" style="left:34px;top:418.4px;width:286px;height:36px;border:1px solid #c9c9c9;border-radius:18px"></div><svg style="left:47.5px;top:426px" width="17" height="17" viewBox="0 0 17 17"><circle cx="6.8" cy="6.8" r="5.2" fill="none" stroke="#1274c0" stroke-width="2.2"/><path d="M10.8 10.8 L16 16" stroke="#1274c0" stroke-width="2.4" stroke-linecap="round"/></svg><div class="t" style="left:75px;top:427.34px;font-size:16.5px;color:#707070;letter-spacing:-0.33px;font-weight:normal;">Search</div><div class="a" style="left:20px;top:457px;width:234px;height:47px;border:2px solid #f5a300;border-radius:6px"></div><div class="a" style="left:35.3px;top:471.3px;width:15.5px;height:15.5px;border:1.3px solid #9a9a9a;border-radius:3px"></div><div class="t" style="left:62px;top:471.76px;font-size:16px;color:#363636;letter-spacing:-0.076px;font-weight:normal;">Sample Save Model.dill</div><svg style="left:299.4px;top:476.5px" width="6" height="16" viewBox="0 0 6 16"><circle cx="2.5" cy="2.2" r="1.7" fill="#1274c0"/><circle cx="2.5" cy="8" r="1.7" fill="#1274c0"/><circle cx="2.5" cy="13.8" r="1.7" fill="#1274c0"/></svg><div class="a" style="left:16px;top:522px;width:321px;height:53px;background:#fff;border-radius:12px;box-shadow:0 1px 3px rgba(0,0,0,.17)"></div><div class="t" style="left:62.0px;top:540.42px;font-size:17px;color:#363636;letter-spacing:0.303px;font-weight:normal;">Artifacts</div><svg style="left:309.5px;top:546.5px" width="12" height="7" viewBox="0 0 12 7"><path d="M0.8 0.8 L6 6 L11.2 0.8" fill="none" stroke="#1274c0" stroke-width="1.8" stroke-linecap="square"/></svg><div class="a" style="left:16px;top:581px;width:321px;height:52px;background:#fff;border-radius:12px;box-shadow:0 1px 3px rgba(0,0,0,.17)"></div><div class="t" style="left:61.5px;top:597.92px;font-size:17px;color:#363636;letter-spacing:-0.305px;font-weight:normal;">Files</div><svg style="left:309.5px;top:605.5px" width="12" height="7" viewBox="0 0 12 7"><path d="M0.8 0.8 L6 6 L11.2 0.8" fill="none" stroke="#1274c0" stroke-width="1.8" stroke-linecap="square"/></svg><div class="a" style="left:16px;top:640.5px;width:321px;height:53px;background:#fff;border-radius:12px;box-shadow:0 1px 3px rgba(0,0,0,.17)"></div><div class="t" style="left:61.5px;top:656.92px;font-size:17px;color:#363636;letter-spacing:0px;font-weight:normal;">Variable explorer</div><svg style="left:309.5px;top:665.0px" width="12" height="7" viewBox="0 0 12 7"><path d="M0.8 0.8 L6 6 L11.2 0.8" fill="none" stroke="#1274c0" stroke-width="1.8" stroke-linecap="square"/></svg><svg style="left:31.2px;top:539.7px" width="22" height="20" viewBox="0 0 22 20"><path d="M11 0 L22 5 L11 10 L0 5 Z" fill="#1274c0"/><path d="M1.5 9 L11 13.5 L20.5 9 M1.5 13.5 L11 18 L20.5 13.5" fill="none" stroke="#1274c0" stroke-width="2.2"/></svg><svg style="left:32px;top:597px" width="21" height="23" viewBox="0 0 21 23"><path d="M0 4 H14 V23 H2 Q0 23 0 21 Z" fill="#1274c0"/><path d="M4.5 1 H15.5 L20.5 6 V20.5 H4.5 Z" fill="#e4e4e4" stroke="#1274c0" stroke-width="1.3"/><path d="M15.5 1 V6 H20.5" fill="none" stroke="#1274c0" stroke-width="1.3"/></svg><svg style="left:30.7px;top:657.5px" width="24" height="22" viewBox="0 0 24 22"><rect x="0.8" y="0.8" width="22.4" height="20" fill="none" stroke="#1274c0" stroke-width="1.6"/><rect x="0" y="0" width="24" height="4" fill="#1274c0"/><text x="12" y="16" font-family="Liberation Serif" font-style="italic" font-size="10" fill="#1274c0" text-anchor="middle">(x)</text></svg></div><div class="a" style="left:1901.5px;top:193px;width:7.5px;height:673px;background:#e4e4e4;border-left:1px solid #d8d8d8"></div><div class="a" style="left:1901.5px;top:193px;width:7px;height:556px;background:#b3b3b3;border-radius:1px"></div></body></html>
